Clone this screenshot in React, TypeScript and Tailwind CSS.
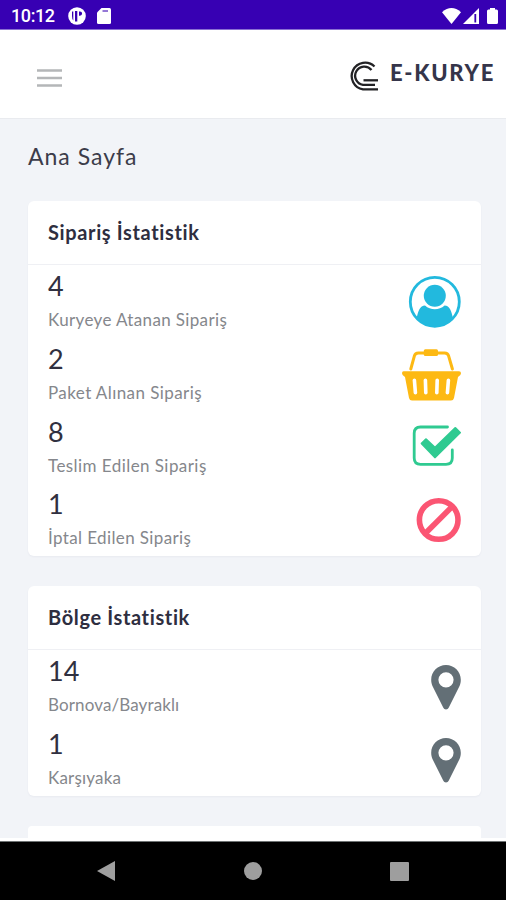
import type { ReactNode } from "react"

type Stat = { value: string; label: string; icon: ReactNode; track: string }

// Stat icons share one 60x73 box, the size of a row
const ICON = "h-[73px] w-[60px] shrink-0"

function UserIcon() {
  return (
    <svg className={ICON} viewBox="0 0 60 73" fill="#22b9de">
      <circle cx="33.8" cy="36.8" r="24.5" fill="none" stroke="#22b9de" strokeWidth="2.8" />
      <circle cx="33.8" cy="30.8" r="11" />
      <path d="M24 40.4C19 40.4 17 46 15.6 53.5A24.5 24.5 0 0 0 52 53.5C50.6 46 48.6 40.4 43.6 40.4C38 45.4 29.6 45.4 24 40.4Z" />
    </svg>
  )
}

function BasketIcon() {
  return (
    <svg className={ICON} viewBox="0 0 60 73" fill="#fdb913">
      <path
        d="M9.8 31L13.4 17.8Q14.2 15 17.4 15H43.6Q46.8 15 47.6 17.8L51.4 31"
        fill="none"
        stroke="#fdb913"
        strokeWidth="3"
        strokeLinecap="round"
      />
      <rect x="22.8" y="11.2" width="14.2" height="6.8" rx="1.5" />
      <path
        fillRule="evenodd"
        d="M2.5 33.2H58Q60 33.2 60 35.2Q60 37.5 57 39L53 60Q52.4 62.5 50 62.5H11Q8.6 62.5 8 60L4 39Q1 37.5 1 35.2Q1 33.2 2.5 33.2ZM11.6 42.2L12.6 54.7a1.8 1.8 0 0 0 3.6 0L15.2 42.2a1.8 1.8 0 0 0-3.6 0ZM22.6 42.2L23 54.7a1.8 1.8 0 0 0 3.6 0L26.2 42.2a1.8 1.8 0 0 0-3.6 0ZM34.4 42.2L34 54.7a1.8 1.8 0 0 0 3.6 0L38 42.2a1.8 1.8 0 0 0-3.6 0ZM45.6 42.2L44.6 54.7a1.8 1.8 0 0 0 3.6 0L49.2 42.2a1.8 1.8 0 0 0-3.6 0Z"
      />
    </svg>
  )
}

function CheckIcon() {
  return (
    <svg className={ICON} viewBox="0 0 60 73">
      <path
        d="M46.5 16H19.5Q13.2 16 13.2 22.3V47Q13.2 53.3 19.5 53.3H45Q51.3 53.3 51.3 47V39"
        fill="none"
        stroke="#2fca91"
        strokeWidth="2.8"
        strokeLinecap="round"
      />
      <path
        d="M20.7 32.5L25 28.2L34 36.7L54.3 17L59 21.6L34 46.4Z"
        fill="#2fca91"
        stroke="#2fca91"
        strokeWidth="2"
        strokeLinejoin="round"
      />
    </svg>
  )
}

function BanIcon() {
  return (
    <svg className={ICON} viewBox="0 0 60 73" fill="none" stroke="#fb5573" strokeWidth="5.6">
      <circle cx="37.7" cy="37" r="19.3" />
      <path d="M24.2 50.5L51.2 23.5" />
    </svg>
  )
}

function PinIcon() {
  return (
    <svg className={ICON} viewBox="0 0 60 73" fill="#636f76">
      <path
        fillRule="evenodd"
        d="M45 14.9C36.8 14.9 30.2 21.5 30.2 29.7C30.2 32.4 30.7 34.4 31.7 36.5L42.2 57.5C43.3 60 46.7 60 47.8 57.5L58.3 36.5C59.3 34.4 59.8 32.4 59.8 29.7C59.8 21.5 53.2 14.9 45 14.9ZM45 22.2a7.6 7.6 0 1 1 0 15.2a7.6 7.6 0 0 1 0-15.2Z"
      />
    </svg>
  )
}

const ORDERS: Stat[] = [
  { value: "4", label: "Kuryeye Atanan Sipariş", icon: <UserIcon />, track: "tracking-[0.36px]" },
  { value: "2", label: "Paket Alınan Sipariş", icon: <BasketIcon />, track: "tracking-[0.42px]" },
  { value: "8", label: "Teslim Edilen Sipariş", icon: <CheckIcon />, track: "tracking-[0.44px]" },
  { value: "1", label: "İptal Edilen Sipariş", icon: <BanIcon />, track: "tracking-[0.38px]" },
]

const REGIONS: Stat[] = [
  { value: "14", label: "Bornova/Bayraklı", icon: <PinIcon />, track: "tracking-[0.12px]" },
  { value: "1", label: "Karşıyaka", icon: <PinIcon />, track: "tracking-[0.2px]" },
]

function StatusBar() {
  return (
    <div className="flex h-[30px] shrink-0 items-center border-b border-[#8a70d2] bg-[#3700b3] pt-[2px] pr-[8px] pl-[11px] text-white">
      <span className="w-[46px] font-[Roboto] text-[18px] leading-none font-medium tracking-[-0.4px]">10:12</span>
      <svg className="ml-[11px] h-[18px] w-[18px]" viewBox="0 0 18 18">
        <circle cx="9" cy="9" r="8.8" fill="#fff" />
        <path d="M4 4.5H5.3V13.5Q4 12 4 9ZM7 4H9.3V14.5H7ZM11 4.5H12A2.1 2.1 0 0 1 12 8.7H11Z" fill="#3700b3" />
      </svg>
      <svg className="ml-[11px] h-[16px] w-[14px]" viewBox="0 0 14 16">
        <path d="M4.5 0H12.5Q14 0 14 1.5V14.5Q14 16 12.5 16H1.5Q0 16 0 14.5V4.5Z" fill="#fff" />
        <path d="M5.5 3H11" stroke="#3700b3" strokeWidth="1.5" opacity=".7" />
      </svg>
      <svg className="ml-auto h-[16px] w-[19px]" viewBox="0 0 19 16" fill="#fff">
        <path d="M0 4.2Q9.5-4 19 4.2L9.5 16Z" />
      </svg>
      <svg className="ml-[2px] h-[16px] w-[16px]" viewBox="0 0 16 16">
        <path d="M16 0V16H0Z" fill="#fff" />
        <path d="M12.3 6V14.5" stroke="#3700b3" strokeWidth="1.8" />
      </svg>
      <svg className="ml-[8px] h-[16px] w-[11px]" viewBox="0 0 11 16" fill="#fff">
        <path d="M3 0H8V1.5H9.5Q11 1.5 11 3V14.5Q11 16 9.5 16H1.5Q0 16 0 14.5V3Q0 1.5 1.5 1.5H3Z" />
      </svg>
    </div>
  )
}

function Header() {
  return (
    <header className="flex h-[88px] shrink-0 items-center bg-white pr-[10px] pl-[37px]">
      <button type="button" aria-label="Menu" className="mt-[8px]">
        <svg className="block h-[18px] w-[25px]" viewBox="0 0 25 18" stroke="#b4b6b8" strokeWidth="2.6">
          <path d="M0 1.5H25M0 9H25M0 16.5H25" />
        </svg>
      </button>
      <svg className="mt-[3px] ml-auto h-[30px] w-[30px]" viewBox="0 0 30 30" fill="none" stroke="#222225" strokeWidth="2.3">
        <path d="M25.5 5.5A13.4 13.4 0 1 0 14 28.3H29" />
        <path d="M22.5 9A9.2 9.2 0 1 0 14 23.9H26" />
        <path d="M14.5 19.3H29" />
      </svg>
      <span className="mb-[3px] ml-[11px] w-[106px] text-[22px] leading-none font-black tracking-[1.7px] whitespace-nowrap text-[#35354a]">
        E-KURYE
      </span>
    </header>
  )
}

function StatCard({ title, stats }: { title: string; stats: Stat[] }) {
  return (
    <section className="rounded-[6px] bg-white shadow-[0_1px_2px_rgba(60,60,90,0.05)]">
      <h2 className="flex h-[64px] items-center border-b border-[#eff0f4] pb-[2px] pl-[20px] text-[20px] font-bold tracking-[0.63px] text-[#2e2e40]">
        {title}
      </h2>
      {stats.map((s) => (
        <div key={s.label} className="flex h-[72.8px] justify-between pr-[20px] pl-[20px]">
          <div className="pt-[5px]">
            <div className="text-[27px] leading-[32px] text-[#303040]">{s.value}</div>
            <div className={`mt-[6px] text-[17px] leading-[24px] text-[#85878c] ${s.track}`}>{s.label}</div>
          </div>
          {s.icon}
        </div>
      ))}
    </section>
  )
}

function NavBar() {
  return (
    <nav className="flex h-[59px] shrink-0 items-center justify-between border-t border-t-[#6f7374] bg-black pr-[97px] pl-[97px]">
      <svg className="h-[20px] w-[18px]" viewBox="0 0 18 20" fill="#9e9e9e">
        <path d="M18 0V20L0 10Z" />
      </svg>
      <span className="h-[18px] w-[18px] rounded-full bg-[#9e9e9e]" />
      <span className="h-[19px] w-[19px] rounded-[1px] bg-[#9e9e9e]" />
    </nav>
  )
}

export default function App() {
  return (
    <div className="flex h-[900px] w-[506px] flex-col overflow-hidden bg-white font-[Lato,'Noto_Sans',sans-serif]">
      <StatusBar />
      <Header />
      <main className="flex h-[720px] shrink-0 flex-col overflow-hidden border-t border-[#e9ebef] bg-[#f2f4f8] pr-[25px] pl-[28px]">
        <h1 className="h-[82px] shrink-0 pt-[20px] text-[23px] leading-[34px] tracking-[1px] text-[#3c3c4a]">Ana Sayfa</h1>
        <div className="flex flex-col gap-[30px]">
          <StatCard title="Sipariş İstatistik" stats={ORDERS} />
          <StatCard title="Bölge İstatistik" stats={REGIONS} />
          <div className="h-[40px] rounded-t-[4px] bg-white" />
        </div>
      </main>
      <div className="h-[3px] shrink-0 bg-white" />
      <NavBar />
    </div>
  )
}
